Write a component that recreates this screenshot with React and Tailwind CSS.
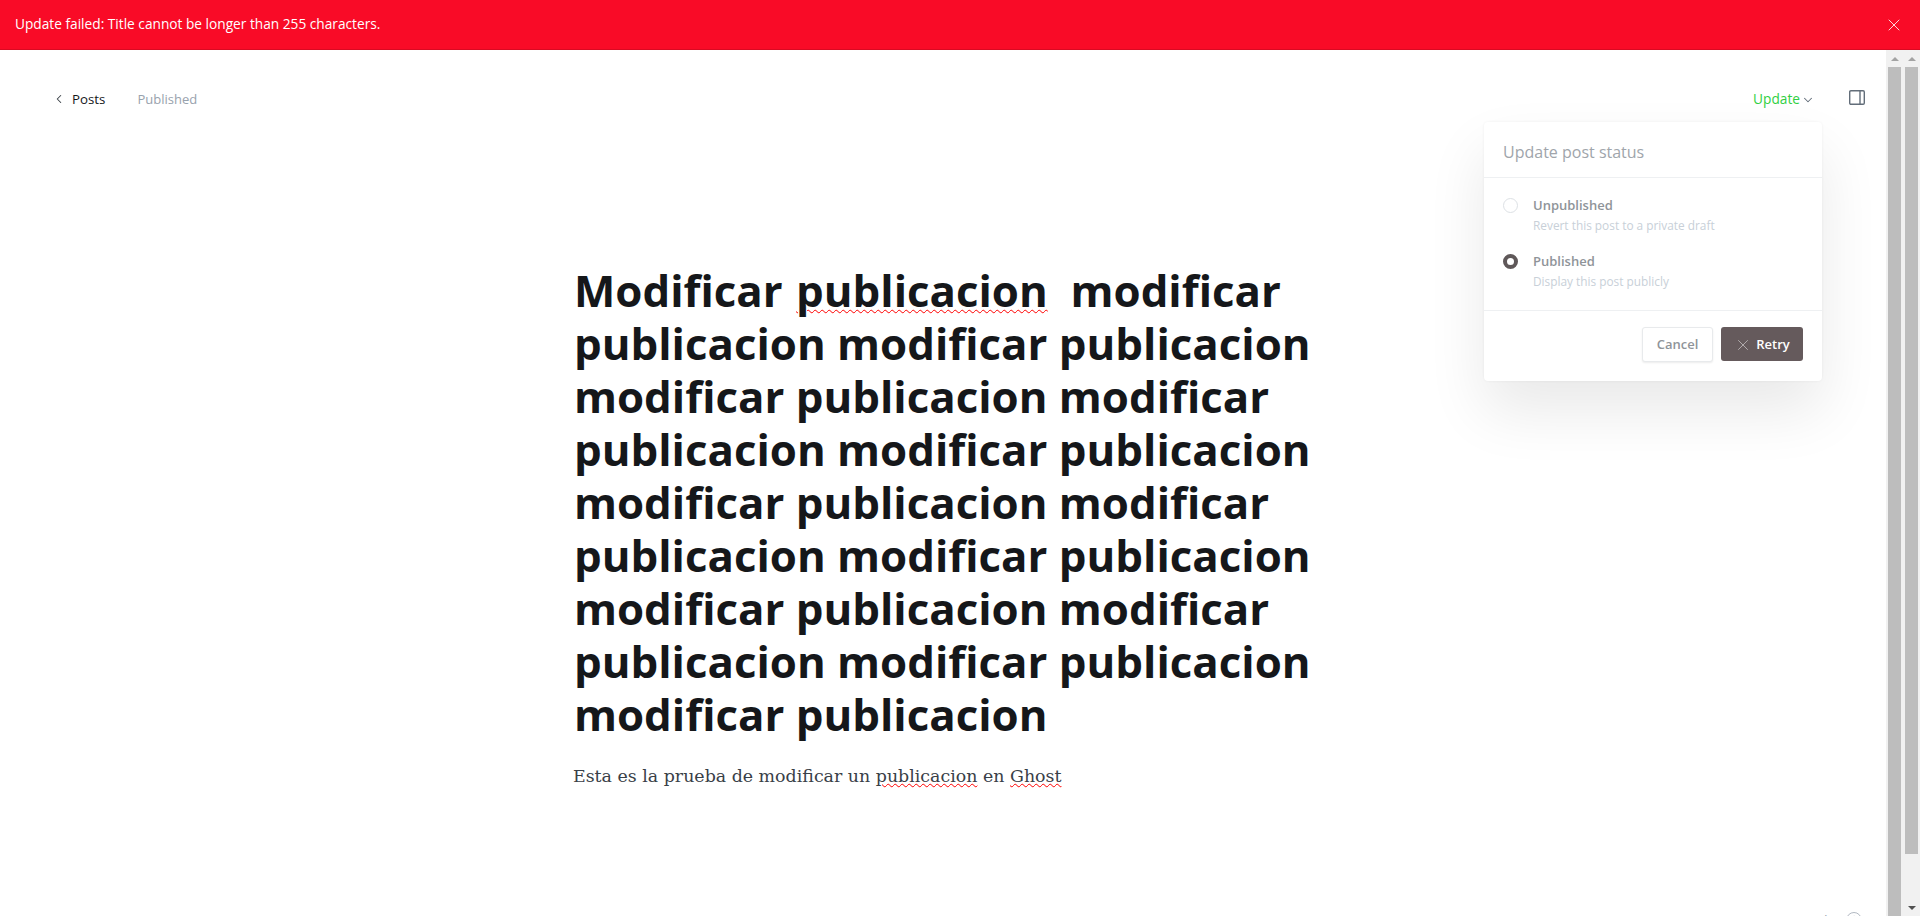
import React from 'react';
import { X, ChevronLeft, ChevronDown, CircleHelp } from 'lucide-react';

const uiFont = "font-['Open_Sans','Noto_Sans',sans-serif]";

const Scrollbar = ({ thumbHeight, showDown }) => (
  <div className="w-[17px] h-full bg-[#f1f1f1] flex flex-col items-center shrink-0 overflow-hidden relative">
    <div className="h-[17px] shrink-0 flex items-center justify-center">
      <div className="w-0 h-0 border-x-[4px] border-x-transparent border-b-[4px] border-b-[#a3a3a3]" />
    </div>
    <div className={`w-[13px] shrink-0 bg-[#bdbdbd] ${thumbHeight}`} />
    {showDown && (
      <div className="absolute bottom-0 h-[17px] flex items-center justify-center">
        <div className="w-0 h-0 border-x-[4px] border-x-transparent border-t-[4px] border-t-[#505050]" />
      </div>
    )}
  </div>
);

const Radio = ({ active, title, hint }) => (
  <div className="flex gap-[15px] h-[40px]">
    {active ? (
      <div className="w-[15px] h-[15px] mt-[-1px] rounded-full border-[4px] border-[#5f5859] bg-white shrink-0" />
    ) : (
      <div className="w-[15px] h-[15px] mt-[-1px] rounded-full border border-[#dde1e5] bg-white shrink-0" />
    )}
    <div>
      <div className="text-[13px] leading-[17px] font-semibold text-[#8f9499] mt-[-2px]">{title}</div>
      <div className="text-[11.85px] leading-[16px] mt-[3px] text-[#c8d0d8]">{hint}</div>
    </div>
  </div>
);

const App = () => (
  <div className={`h-[916px] w-full overflow-hidden bg-white flex flex-col ${uiFont}`}>
    <div className="h-[50px] shrink-0 bg-[#f90b27] border-b border-[#d90a22] flex items-center justify-between pl-[15px] pr-[16px]">
      <span className="text-[13.7px] text-white">Update failed: Title cannot be longer than 255 characters.</span>
      <X size={20} strokeWidth={1} className="text-white" />
    </div>

    <div className="flex-1 min-h-0 flex relative">
      <div className="flex-1 min-w-0 relative">
        <header className="h-[98px] flex items-center justify-between pl-[53px] pr-[21px]">
          <div className="flex items-center text-[13.3px]">
            <ChevronLeft size={14} strokeWidth={1.8} className="text-[#394047] -ml-[1px]" />
            <span className="ml-[6px] mt-[1px] text-[#15171a]">Posts</span>
            <span className="ml-[32px] mt-[1px] text-[13px] text-[#98a2ad]">Published</span>
          </div>
          <div className="flex items-center">
            <span className="mt-[1px] text-[13.7px] text-[#30cf43]">Update</span>
            <ChevronDown size={14} strokeWidth={1.8} className="ml-[1px] mt-[3px] text-[#626d79]" />
            <svg className="ml-[34px] mb-[2px]" width="16" height="15" viewBox="0 0 16 15" fill="none" stroke="#626d79" strokeWidth="1.4">
              <rect x="0.7" y="0.7" width="14.6" height="13.6" rx="1.2" />
              <path d="M11 0.7v13.6" />
            </svg>
          </div>
        </header>

        <main className="w-[760px] ml-[574px] pt-[116px]">
          <h1 className="w-[750px] whitespace-pre-wrap font-['Open_Sans','Noto_Sans',sans-serif] font-bold text-[43.8px] leading-[53px] text-[#15171a]">
            Modificar <span className="ml-[2px] underline decoration-wavy decoration-[#f00] decoration-1 underline-offset-2">publicacion</span>{'  modificar publicacion modificar publicacion modificar publicacion modificar publicacion modificar publicacion modificar publicacion modificar publicacion modificar publicacion modificar publicacion modificar publicacion modificar publicacion modificar publicacion'}
          </h1>
          <p className="mt-[19px] ml-[-1px] font-['DejaVu_Serif','Liberation_Serif',serif] text-[17.4px] leading-[32px] text-[#394047]">
            Esta es la prueba de modificar un <span className="underline decoration-wavy decoration-[#f00] decoration-1">publicacion</span> en <span className="underline decoration-wavy decoration-[#f00] decoration-1">Ghost</span>
          </p>
        </main>

        <div className="absolute left-[1484px] top-[72px] w-[338px] h-[259px] bg-white rounded-[4px] shadow-[0_0_3px_rgba(0,0,0,0.06),0_30px_60px_rgba(0,0,0,0.09)]">
          <div className="h-[56px] border-b border-[#eef0f2] pl-[19px] pt-[18px] text-[16px] leading-[24px] text-[#a0a5ab]">Update post status</div>
          <div className="h-[133px] border-b border-[#eef0f2] pl-[19px] pt-[21px] flex flex-col gap-[16px]">
            <Radio title="Unpublished" hint="Revert this post to a private draft" />
            <Radio active title="Published" hint="Display this post publicly" />
          </div>
          <div className="flex justify-end gap-[8px] pr-[19px] pt-[16px]">
            <button className="w-[71px] h-[35px] bg-white border border-[#e8eaec] rounded-[3px] shadow-[0_1px_2px_rgba(0,0,0,0.08)] text-[13px] font-semibold text-[#8f9499]">Cancel</button>
            <button className="w-[82px] h-[34px] bg-[#655a5c] rounded-[3px] flex items-center justify-center gap-[4px] pt-[1px] text-[13px] font-semibold text-white">
              <X size={18} strokeWidth={1} className="text-[#c9c5c6]" />
              Retry
            </button>
          </div>
        </div>

        <div className="absolute left-[1778px] top-[861px] flex items-start gap-[11px] text-[13px] leading-[18px] text-[#98a2ad]">
          <span>10 words</span>
          <CircleHelp size={18} strokeWidth={1} className="text-[#98a2ad]" />
        </div>
      </div>
      <Scrollbar thumbHeight="h-[849px]" />
      <Scrollbar thumbHeight="h-[787px]" showDown />
    </div>
  </div>
);

export default App;
